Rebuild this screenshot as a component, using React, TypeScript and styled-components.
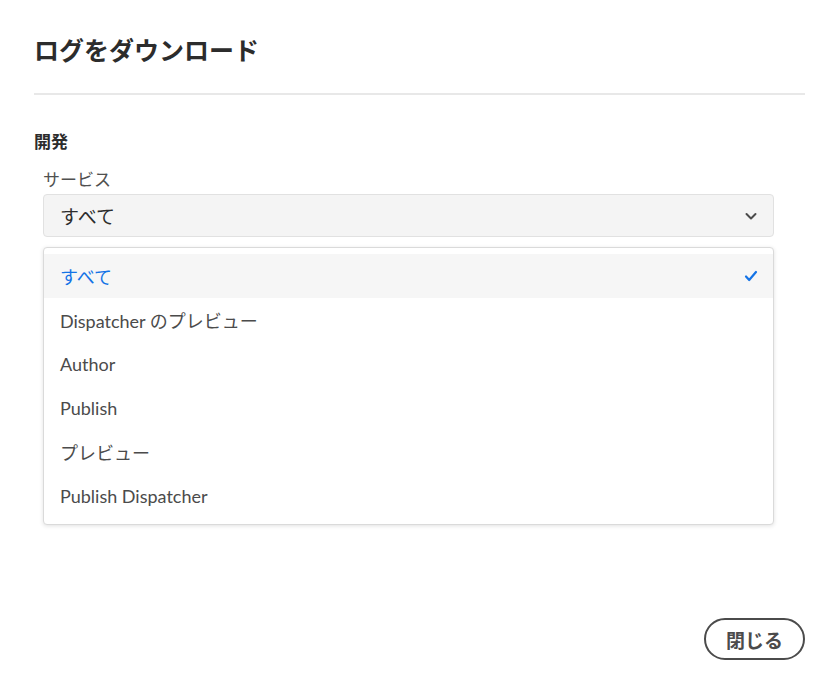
import React from 'react';
import styled, { createGlobalStyle } from 'styled-components';

const GlobalStyle = createGlobalStyle`
  html, body {
    margin: 0;
    padding: 0;
    background: #ffffff;
  }
  body {
    font-family: Lato, "Noto Sans CJK JP", sans-serif;
    color: #2c2c2c;
  }
`;

const services = [
  'すべて',
  'Dispatcher のプレビュー',
  'Author',
  'Publish',
  'プレビュー',
  'Publish Dispatcher',
];

function App() {
  const selected = 'すべて';
  return (
    <>
      <GlobalStyle />
      <Dialog>
        <Title>ログをダウンロード</Title>
        <Divider />
        <Section>開発</Section>
        <Field>
          <Label>サービス</Label>
          <Picker>
            <span>{selected}</span>
            <svg width="14" height="14" viewBox="0 0 14 14">
              <path d="M2.5 5l4.5 4.5L11.5 5" fill="none" stroke="#4b4b4b" strokeWidth="2" strokeLinecap="round" strokeLinejoin="round" />
            </svg>
          </Picker>
          <Menu>
            {services.map((s) => (
              <Item key={s} active={s === selected}>
                <span>{s}</span>
                {s === selected && (
                  <svg width="16" height="16" viewBox="0 0 16 16">
                    <path d="M3 8.5l3.2 3.5L13 4" fill="none" stroke="#1473e6" strokeWidth="2.2" strokeLinecap="round" strokeLinejoin="round" />
                  </svg>
                )}
              </Item>
            ))}
          </Menu>
        </Field>
        <Footer>
          <CloseButton>閉じる</CloseButton>
        </Footer>
      </Dialog>
    </>
  );
}

const Dialog = styled.div`
  width: 832px;
  height: 683px;
  box-sizing: border-box;
  padding: 32px 27px 23px 34px;
  display: flex;
  flex-direction: column;
`;

const Title = styled.h1`
  margin: 0;
  font-size: 25px;
  font-weight: 700;
  line-height: 34px;
  color: #2c2c2c;
  font-family: "Noto Sans CJK JP", sans-serif;
`;

const Divider = styled.div`
  height: 2px;
  background: #e8e8e8;
  margin-top: 27px;
`;

const Section = styled.h2`
  margin: 36px 0 0;
  font-size: 17px;
  font-weight: 700;
  line-height: 20px;
  color: #2c2c2c;
  font-family: "Noto Sans CJK JP", sans-serif;
`;

const Field = styled.div`
  margin: 18px 31px 0 9px;
  display: flex;
  flex-direction: column;
`;

const Label = styled.div`
  font-size: 17px;
  line-height: 20px;
  color: #505050;
  font-family: "Noto Sans CJK JP", sans-serif;
  margin-bottom: 5px;
`;

const Picker = styled.div`
  height: 43px;
  box-sizing: border-box;
  background: #f4f4f4;
  border: 1px solid #e1e1e1;
  border-radius: 4px;
  display: flex;
  align-items: center;
  justify-content: space-between;
  padding: 0 15px 0 16px;
  font-size: 19px;
  color: #2c2c2c;
  font-family: "Noto Sans CJK JP", sans-serif;
`;

const Menu = styled.div`
  margin-top: 10px;
  border: 1px solid #dadada;
  border-radius: 4px;
  box-shadow: 0 1px 4px rgba(0, 0, 0, 0.12);
  padding: 6px 0 6px;
  background: #fff;
`;

const Item = styled.div<{ active?: boolean }>`
  height: 44px;
  display: flex;
  align-items: center;
  justify-content: space-between;
  padding: 0 14px 0 16px;
  font-size: 18px;
  color: ${(p) => (p.active ? '#1473e6' : '#4b4b4b')};
  background: ${(p) => (p.active ? '#f6f6f6' : 'transparent')};
`;

const Footer = styled.div`
  margin-top: auto;
  display: flex;
  justify-content: flex-end;
`;

const CloseButton = styled.button`
  height: 42px;
  padding: 0 20px;
  border: 2px solid #4b4b4b;
  border-radius: 21px;
  background: #fff;
  font-size: 19px;
  font-weight: 700;
  color: #4b4b4b;
  font-family: "Noto Sans CJK JP", sans-serif;
  cursor: pointer;
`;

export default App;
